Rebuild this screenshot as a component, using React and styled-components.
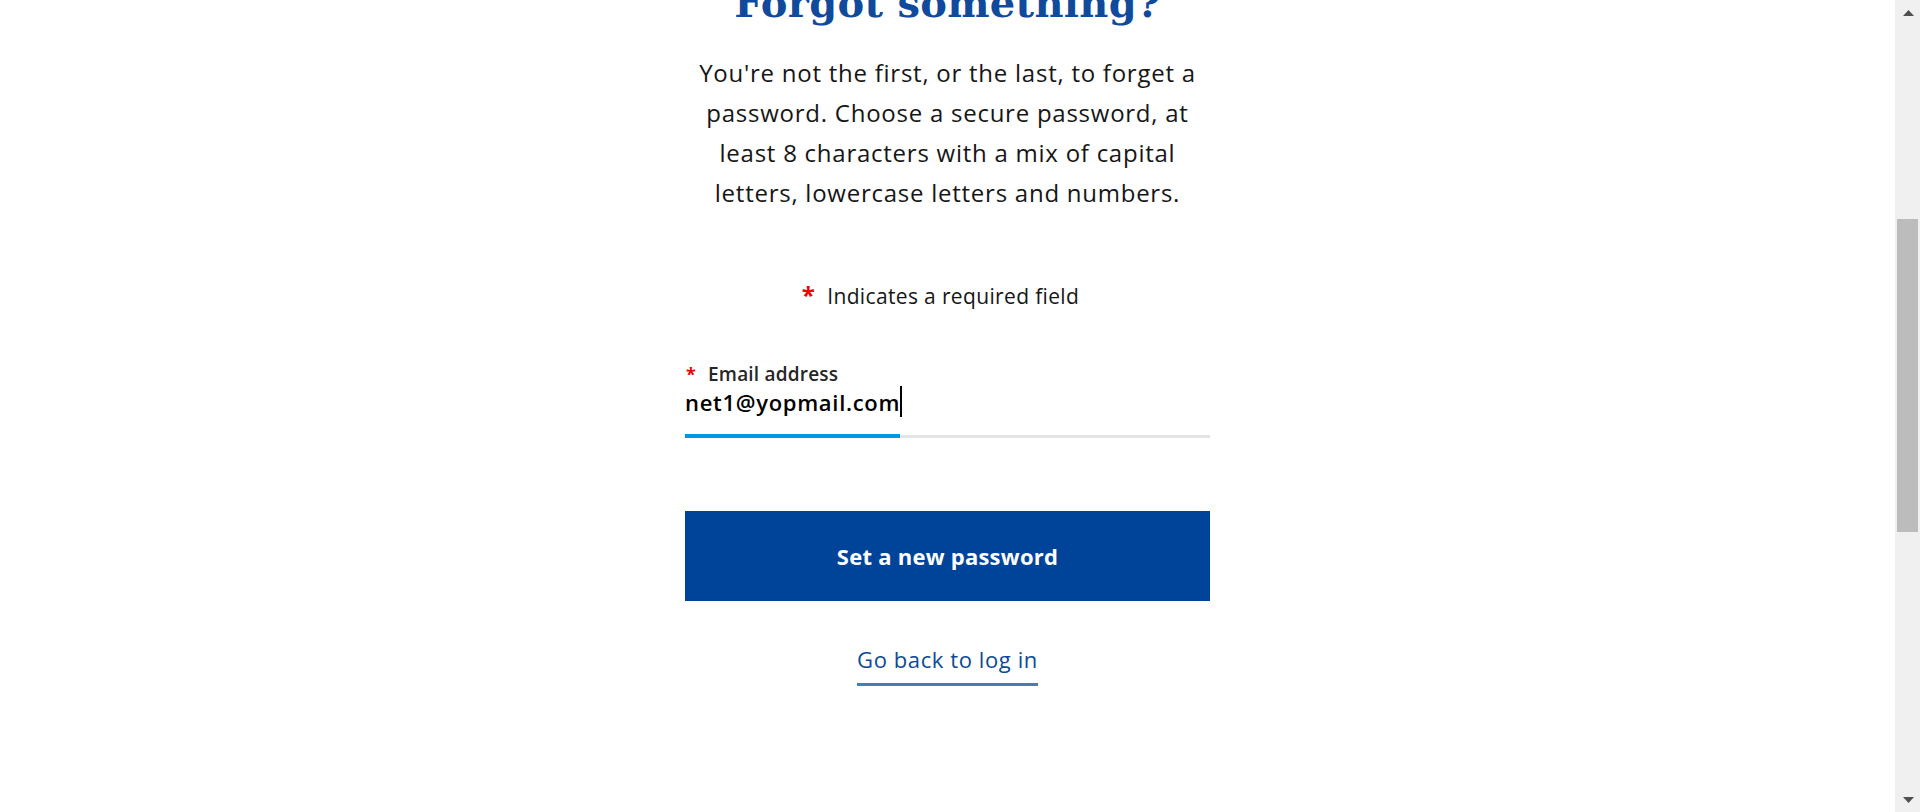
import { useEffect, useRef } from "react"
import styled, { createGlobalStyle } from "styled-components"

const GlobalStyle = createGlobalStyle`
    html, body {
        margin: 0;
        padding: 0;
        height: 100%;
        overflow: hidden;
        background: #ffffff;
    }
    * {
        box-sizing: border-box;
    }
`

const Frame = styled.div`
    display: flex;
    height: 100vh;
    width: 100vw;
`

const Main = styled.main`
    flex: 1;
    overflow: hidden;
    font-family: "Open Sans", "Liberation Sans", sans-serif;
    color: #161616;
`

const Page = styled.div`
    display: flex;
    flex-direction: column;
    align-items: center;
    padding-top: 100px;
    padding-bottom: 400px;
`

const Heading = styled.h1`
    margin: 0;
    font-family: "DejaVu Serif", "Liberation Serif", serif;
    font-weight: 700;
    font-size: 40px;
    line-height: 48px;
    letter-spacing: 0.3px;
    color: #0f4a9c;
`

const Intro = styled.p`
    margin: 26px 0 0;
    font-size: 24px;
    line-height: 40px;
    letter-spacing: 0.75px;
    text-align: center;
`

const Note = styled.p`
    margin: 67px 0 0;
    padding-right: 14px;
    font-size: 21px;
    line-height: 30px;
    letter-spacing: 0.35px;
    display: flex;
    align-items: baseline;
    gap: 12px;
`

const Star = styled.span`
    color: #f00000;
    font-size: ${p => p.$size}px;
    font-weight: 700;
`

const Form = styled.form`
    width: 525px;
    margin-top: 51px;
    display: flex;
    flex-direction: column;
`

const Label = styled.label`
    display: flex;
    align-items: baseline;
    gap: 12px;
    padding-left: 1px;
    font-size: 19px;
    line-height: 24px;
    font-weight: 600;
    letter-spacing: 0.2px;
    color: #262626;
`

const Value = styled.div`
    margin-top: 2px;
    display: flex;
    align-items: flex-start;
    font-size: 22px;
    line-height: 28px;
    font-weight: 600;
    letter-spacing: 0.7px;
    color: #000;
`

const Caret = styled.span`
    display: block;
    width: 2px;
    height: 31px;
    margin: -2px 0 -1px 0;
    background: #000;
`

const Track = styled.div`
    margin-top: 18px;
    height: 4px;
    display: flex;
    align-items: flex-end;
    background: linear-gradient(to bottom, transparent 1px, #e4e4e4 1px);
`

const Fill = styled.div`
    height: 4px;
    background: #0096e6;
`

const Submit = styled.button`
    margin-top: 73px;
    height: 90px;
    border: none;
    background: #00449a;
    color: #ffffff;
    font-family: "Open Sans", "Liberation Sans", sans-serif;
    font-size: 22px;
    font-weight: 700;
    letter-spacing: 0.25px;
    cursor: pointer;
`

const BackLink = styled.a`
    align-self: center;
    margin-top: 45px;
    padding-bottom: 11px;
    border-bottom: 3px solid #4a7ab8;
    font-size: 22px;
    line-height: 26px;
    letter-spacing: 0.6px;
    color: #0b4a96;
    text-decoration: none;
`

const ScrollBar = styled.div`
    width: 25px;
    display: flex;
    flex-direction: column;
    background: #f0f0f0;
`

const Arrow = styled.div`
    height: 25px;
    display: flex;
    align-items: center;
    justify-content: center;
    padding-left: 2px;
`

const ThumbTrack = styled.div`
    flex: 1;
    padding: 0 2px;
`

const Thumb = styled.div`
    height: 313px;
    background: #bcbcbc;
`

function Triangle({ down }) {
    return (
        <svg width="11" height="6" viewBox="0 0 11 6">
            <path d={down ? "M0 0h11L5.5 6z" : "M5.5 0L11 6H0z"} fill="#505050" />
        </svg>
    )
}

export default function App() {
    const ref = useRef(null)

    useEffect(() => {
        if (ref.current) ref.current.scrollTop = 121
    }, [])

    return (
        <>
            <GlobalStyle />
            <Frame>
                <Main ref={ref}>
                    <Page>
                        <Heading>Forgot something?</Heading>
                        <Intro>
                            You're not the first, or the last, to forget a<br />
                            password. Choose a secure password, at<br />
                            least 8 characters with a mix of capital<br />
                            letters, lowercase letters and numbers.
                        </Intro>
                        <Note>
                            <Star $size={24}>*</Star>
                            Indicates a required field
                        </Note>
                        <Form onSubmit={e => e.preventDefault()}>
                            <Label>
                                <Star $size={18}>*</Star>
                                Email address
                            </Label>
                            <Value>
                                net1@yopmail.com
                                <Caret />
                            </Value>
                            <Track>
                                <Fill style={{ width: "215px" }} />
                            </Track>
                            <Submit type="submit">Set a new password</Submit>
                            <BackLink href="#">Go back to log in</BackLink>
                        </Form>
                    </Page>
                </Main>
                <ScrollBar>
                    <Arrow><Triangle /></Arrow>
                    <ThumbTrack>
                        <Thumb style={{ marginTop: "194px" }} />
                    </ThumbTrack>
                    <Arrow><Triangle down /></Arrow>
                </ScrollBar>
            </Frame>
        </>
    )
}
